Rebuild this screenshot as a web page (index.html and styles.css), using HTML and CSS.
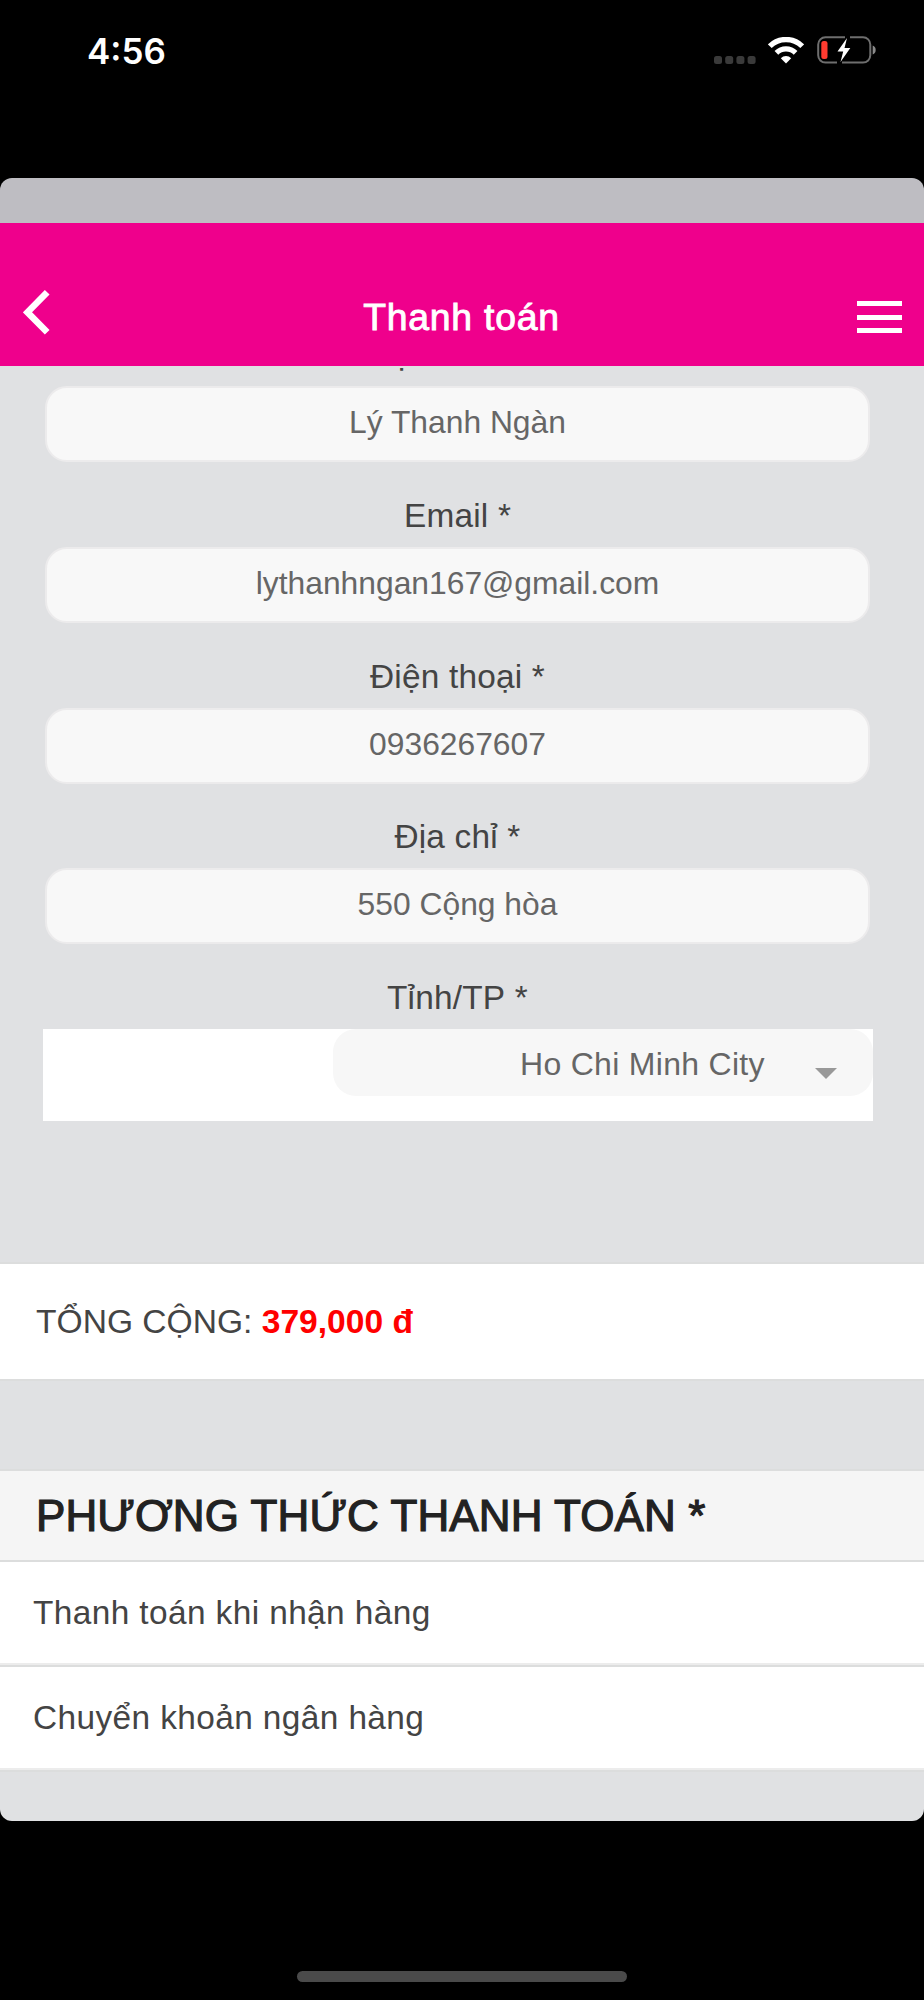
FILE: index.html
```html
<!DOCTYPE html>
<html lang="vi">
<head>
  <meta charset="UTF-8">
  <meta name="viewport" content="width=device-width, initial-scale=1.0">
  <title>Thanh toán</title>
  <link rel="stylesheet" href="styles.css">
</head>
<body>

<div class="status-bar">
  <span class="time">4:56</span>
  <div class="status-icons">
    <svg class="signal" width="42" height="8" viewBox="0 0 42 8" fill="#3a3a3a">
      <rect x="0" y="0" width="8" height="8" rx="2.5"/>
      <rect x="11.2" y="0" width="8" height="8" rx="2.5"/>
      <rect x="22.4" y="0" width="8" height="8" rx="2.5"/>
      <rect x="33.6" y="0" width="8" height="8" rx="2.5"/>
    </svg>
    <svg class="wifi" width="36" height="27" viewBox="0 0 36 27">
      <path d="M1.8 9.2a23 23 0 0 1 32.4 0" fill="none" stroke="#fff" stroke-width="5.4"/>
      <path d="M8.4 15.8a13.6 13.6 0 0 1 19.2 0" fill="none" stroke="#fff" stroke-width="5.2"/>
      <path d="M18 26.5l-5.2-5.3a7.5 7.5 0 0 1 10.4 0z" fill="#fff"/>
    </svg>
    <svg class="battery" width="59" height="28" viewBox="0 0 59 28">
      <path d="M28 1.2H8.5a7.3 7.3 0 0 0-7.3 7.3v10.8a7.3 7.3 0 0 0 7.3 7.3H20M33 1.2h13a7.3 7.3 0 0 1 7.3 7.3v10.8a7.3 7.3 0 0 1-7.3 7.3H25" fill="none" stroke="#6e6e6e" stroke-width="2"/>
      <path d="M55.7 9.5c4 1.5 4 7.5 0 9z" fill="#8a8a8a"/>
      <rect x="4.3" y="5" width="6.2" height="18" rx="2.5" fill="#ff3b30"/>
      <path d="M30 2L20.500 15.500h5.700L23.500 26 33.300 12h-5.800z" fill="#fff"/>
    </svg>
  </div>
</div>

<div class="app">
  <header>
    <svg class="back" width="27" height="45" viewBox="0 0 27 45">
      <path d="M24.200 2.300L4.500 22.300l19.700 20" fill="none" stroke="#fff" stroke-width="6.600"/>
    </svg>
    <h1>Thanh toán</h1>
    <div class="menu">
      <span></span>
      <span></span>
      <span></span>
    </div>
  </header>

  <section class="form">
    <div class="field">
      <div class="label">Họ và Tên *</div>
      <div class="input">Lý Thanh Ngàn</div>
    </div>
    <div class="field">
      <div class="label">Email *</div>
      <div class="input">lythanhngan167@gmail.com</div>
    </div>
    <div class="field">
      <div class="label">Điện thoại *</div>
      <div class="input">0936267607</div>
    </div>
    <div class="field">
      <div class="label">Địa chỉ *</div>
      <div class="input">550 Cộng hòa</div>
    </div>
    <div class="field">
      <div class="label">Tỉnh/TP *</div>
      <div class="select-row">
        <div class="select">
          <span>Ho Chi Minh City</span>
          <i class="arrow"></i>
        </div>
      </div>
    </div>
  </section>

  <section class="total">
    <span>TỔNG CỘNG:</span>
    <strong>379,000 đ</strong>
  </section>

  <section class="payment">
    <h2>PHƯƠNG THỨC THANH TOÁN *</h2>
    <div class="option">Thanh toán khi nhận hàng</div>
    <div class="option">Chuyển khoản ngân hàng</div>
  </section>
</div>

<div class="home-bar"></div>

</body>
</html>
```

FILE: styles.css
```css
* { box-sizing: border-box; }
body {
  margin: 0;
  height: 2000px;
  display: flex;
  flex-direction: column;
  overflow: hidden;
  background: #000;
  color: #444;
  font-family: "Liberation Sans", Arial, sans-serif;
}

/* status bar */
.status-bar {
  height: 178px;
  padding: 30px 48px 0 87px;
  display: flex;
  justify-content: space-between;
  align-items: flex-start;
}
.time {
  color: #fff;
  font: 600 35px/42px Inter, sans-serif;
}
.status-icons {
  display: flex;
  align-items: flex-end;
  height: 34px;
}
.wifi { margin: 0 13px 0 12px; }

/* app window */
.app {
  height: 1643px;
  padding-top: 45px;
  background: linear-gradient(#bebdc2 60px, #e0e1e3 60px);
  border-radius: 12px;
  overflow: hidden;
}
header {
  position: relative;
  z-index: 1;
  height: 143px;
  padding: 0 22px 0 23px;
  display: flex;
  justify-content: space-between;
  align-items: flex-start;
  background: #ef008c;
  color: #fff;
}
.back { margin-top: 67px; }
h1 {
  margin: 72px 0 0 16px;
  font-size: 37.3px;
  line-height: 44px;
  font-weight: normal;
  -webkit-text-stroke: 0.9px #fff;
  letter-spacing: 0.8px;
}
.menu {
  width: 45px;
  margin-top: 78px;
  display: flex;
  flex-direction: column;
  gap: 8.5px;
}
.menu span {
  height: 5px;
  background: #fff;
}

/* form */
.form {
  height: 896px;
  padding: 0 51px 0 42px;
  overflow: hidden;
}
.field {
  height: 160.8px;
  padding-top: 22.8px;
}
.field:first-child { margin-top: -64.8px; }
.label {
  text-align: center;
  font-size: 33.4px;
  line-height: 62px;
  letter-spacing: 0.2px;
  font-kerning: none;
}
.input {
  height: 76px;
  margin-left: 3px;
  width: 825px;
  border: 2px solid #ecebec;
  border-radius: 22px;
  background: #f8f8f8;
  color: #666;
  text-align: center;
  font-size: 31.8px;
  line-height: 68px;
}
.select-row {
  width: 830px;
  height: 91.5px;
  margin-left: 1px;
  display: flex;
  justify-content: flex-end;
  align-items: flex-start;
  background: #fff;
}
.select {
  width: 540px;
  height: 67px;
  padding: 0 36px 0 187px;
  display: flex;
  justify-content: space-between;
  border-radius: 23px;
  background: #f7f7f7;
  color: #666;
  font-size: 32px;
  line-height: 70px;
  letter-spacing: 0.3px;
}
.arrow {
  margin-top: 39px;
  height: 0;
  border: 11px solid transparent;
  border-top: 11.5px solid #999;
  border-bottom: 0;
}

/* order total */
.total {
  height: 119px;
  margin-bottom: 88px;
  padding-left: 36px;
  border-top: 2px solid #dcdddd;
  border-bottom: 2px solid #dcdddd;
  background: #fff;
  font-size: 33.6px;
  line-height: 115px;
}
.total strong { color: #f00; }

/* payment methods */
h2 {
  margin: 0;
  height: 93px;
  padding-left: 36px;
  border-top: 2px solid #dcdddd;
  border-bottom: 2px solid #dcdddd;
  background: #f5f5f5;
  color: #222;
  font-size: 44px;
  line-height: 90px;
  font-weight: normal;
  -webkit-text-stroke: 1.2px #222;
  letter-spacing: 0.1px;
}
.option {
  height: 105px;
  padding-left: 33px;
  border-bottom: 2px solid #dcdddd;
  background: #fff;
  box-shadow: inset 0 -2px #ececec;
  font-size: 33.4px;
  line-height: 102px;
  letter-spacing: 0.4px;
}

.home-bar {
  width: 330px;
  height: 11px;
  margin: 150px 0 0 297px;
  border-radius: 6px;
  background: #4a4a4a;
}
```
